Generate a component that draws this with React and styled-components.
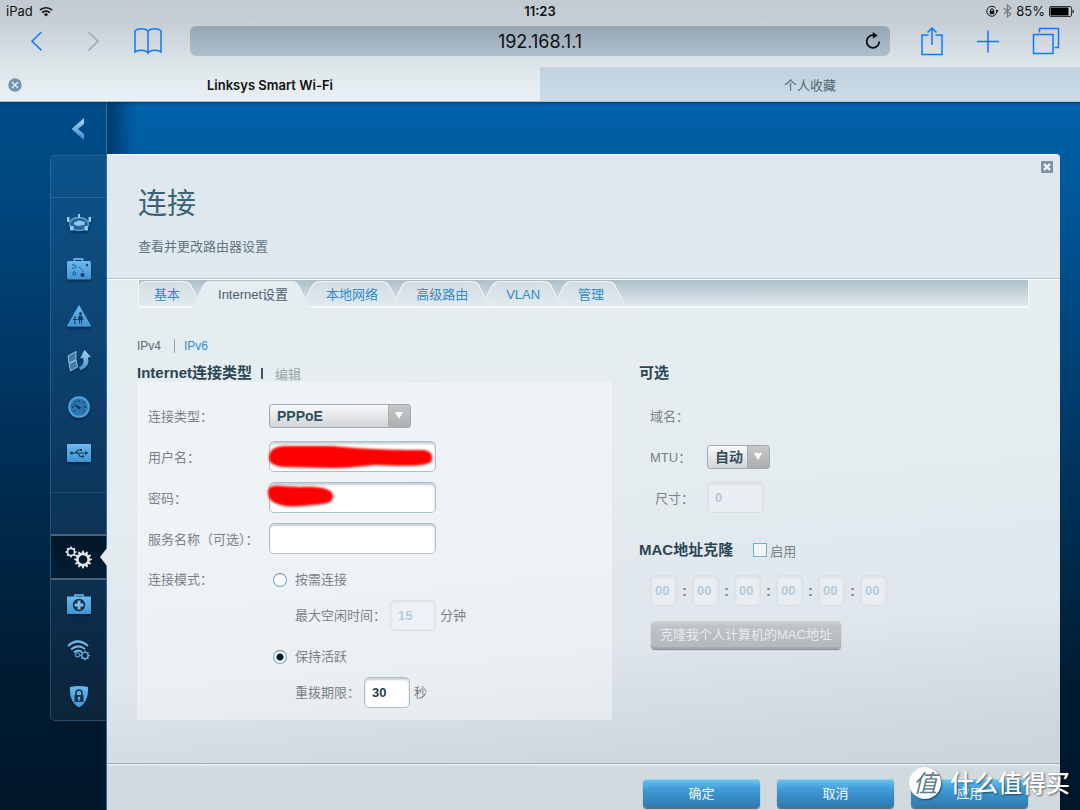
import styled, { createGlobalStyle, css } from "styled-components";
import { Fragment, useState } from "react";

const GlobalStyle = createGlobalStyle`
  * {
    box-sizing: border-box;
  }

  body {
    margin: 0;
    font-family: "Liberation Sans", "Noto Sans CJK SC", sans-serif;
    font-size: 13px;
    color: #7b8286;
  }

  button, input, select {
    font-family: inherit;
    margin: 0;
  }
`;

const tabs = ["基本", "Internet设置", "本地网络", "高级路由", "VLAN", "管理"];

const macParts = [0, 1, 2, 3, 4, 5];

const gearPath = (cx, cy, r, teeth) => {
  const points = [];
  for (let i = 0; i < teeth * 4; i++) {
    const radius = i % 4 < 2 ? r : r * 0.76;
    const angle = ((i - 0.5) / (teeth * 4)) * Math.PI * 2 - Math.PI / 2;
    points.push(
      `${(cx + radius * Math.cos(angle)).toFixed(2)} ${(cy + radius * Math.sin(angle)).toFixed(2)}`
    );
  }
  const hole = r * 0.48;
  return `M${points.join("L")}Z M${cx - hole} ${cy}a${hole} ${hole} 0 1 0 ${hole * 2} 0a${hole} ${hole} 0 1 0 ${-hole * 2} 0Z`;
};

export default function App() {
  const [active, setActive] = useState("Internet设置");
  const [mode, setMode] = useState("keep");

  return (
    <Page>
      <GlobalStyle />
      <BrowserHeader />
      <Workspace>
        <Sidebar />
        <Main>
          <Panel>
            <PanelHeader>
              <h1>连接</h1>
              <p>查看并更改路由器设置</p>
              <CloseButton type="button" aria-label="关闭">
                <svg width="14" height="14" viewBox="0 0 14 14">
                  <rect x="1" y="1" width="12" height="12" rx="1" fill="#7d939f" />
                  <path d="M4 4l6 6M10 4l-6 6" stroke="#f4f7f8" strokeWidth="2.4" />
                </svg>
              </CloseButton>
            </PanelHeader>
            <PanelBody>
              <TabBar>
                {tabs.map((tab, i) => (
                  <Tab
                    key={tab}
                    type="button"
                    $active={tab === active}
                    $first={i === 0}
                    $order={tabs.length - i}
                    onClick={() => setActive(tab)}
                  >
                    <span>{tab}</span>
                  </Tab>
                ))}
              </TabBar>
              <Versions>
                <span>IPv4</span>
                <a href="#ipv6">IPv6</a>
              </Versions>
              <Columns>
                <section>
                  <SectionTitle>
                    <h2>Internet连接类型</h2>
                    <i />
                    <a href="#edit">编辑</a>
                  </SectionTitle>
                  <Box>
                    <Row>
                      <label htmlFor="type">连接类型：</label>
                      <SelectWrap $width={142}>
                        <select id="type" defaultValue="PPPoE">
                          <option>PPPoE</option>
                        </select>
                      </SelectWrap>
                    </Row>
                    <Row>
                      <label htmlFor="user">用户名：</label>
                      <Field>
                        <TextInput id="user" type="text" $width={167} />
                        <Scribble width="172" height="32" viewBox="0 0 172 32" aria-hidden="true">
                          <path
                            d="M2 17C2 9 8 5 18 5L64 5C88 7 110 9 156 9C166 10 166 16 164 21C158 26 130 25 108 24C88 26 80 27 66 27L16 26C7 25 2 22 2 17Z"
                            fill="#ff0000"
                          />
                        </Scribble>
                      </Field>
                    </Row>
                    <Row>
                      <label htmlFor="pass">密码：</label>
                      <Field>
                        <TextInput id="pass" type="password" $width={167} />
                        <Scribble width="172" height="32" viewBox="0 0 172 32" aria-hidden="true">
                          <path
                            d="M1 12C0 4 6 3 14 4L34 5C46 4 66 5 66 14C66 22 56 22 46 23C36 24 26 25 18 24C9 22 2 20 1 12Z"
                            fill="#ff0000"
                          />
                        </Scribble>
                      </Field>
                    </Row>
                    <Row>
                      <label htmlFor="service">服务名称（可选）：</label>
                      <TextInput id="service" type="text" $width={167} />
                    </Row>
                    <ModeRow>
                      <span>连接模式：</span>
                      <ModeGroup>
                        <RadioLabel>
                          <Radio
                            type="radio"
                            name="mode"
                            checked={mode === "demand"}
                            onChange={() => setMode("demand")}
                          />
                          按需连接
                        </RadioLabel>
                        <SubRow>
                          <label htmlFor="idle">最大空闲时间：</label>
                          <TextInput
                            id="idle"
                            type="text"
                            defaultValue="15"
                            disabled={mode !== "demand"}
                            $width={46}
                          />
                          <span>分钟</span>
                        </SubRow>
                        <RadioLabel>
                          <Radio
                            type="radio"
                            name="mode"
                            checked={mode === "keep"}
                            onChange={() => setMode("keep")}
                          />
                          保持活跃
                        </RadioLabel>
                        <SubRow>
                          <label htmlFor="redial">重拨期限：</label>
                          <TextInput
                            id="redial"
                            type="text"
                            defaultValue="30"
                            disabled={mode !== "keep"}
                            $width={46}
                          />
                          <span>秒</span>
                        </SubRow>
                      </ModeGroup>
                    </ModeRow>
                  </Box>
                </section>
                <section>
                  <SectionTitle>
                    <h2>可选</h2>
                  </SectionTitle>
                  <Options>
                    <OptionRow>
                      <span>域名：</span>
                    </OptionRow>
                    <OptionRow>
                      <label htmlFor="mtu">MTU：</label>
                      <SelectWrap $width={63}>
                        <select id="mtu" defaultValue="自动">
                          <option>自动</option>
                        </select>
                      </SelectWrap>
                    </OptionRow>
                    <OptionRow $indent>
                      <label htmlFor="size">尺寸：</label>
                      <TextInput id="size" type="text" defaultValue="0" disabled $width={57} />
                    </OptionRow>
                  </Options>
                  <MacTitle>
                    <h2>MAC地址克隆</h2>
                    <label>
                      <CheckBox type="checkbox" />
                      启用
                    </label>
                  </MacTitle>
                  <MacRow>
                    {macParts.map((i) => (
                      <Fragment key={i}>
                        {i > 0 && <MacColon>:</MacColon>}
                        <MacInput
                          type="text"
                          aria-label={`MAC ${i + 1}`}
                          defaultValue="00"
                          disabled
                          $width={27}
                        />
                      </Fragment>
                    ))}
                  </MacRow>
                  <CloneButton type="button" disabled>
                    克隆我个人计算机的MAC地址
                  </CloneButton>
                </section>
              </Columns>
            </PanelBody>
            <PanelFooter>
              <BlueButton type="button">确定</BlueButton>
              <BlueButton type="button">取消</BlueButton>
              <BlueButton type="button">应用</BlueButton>
            </PanelFooter>
          </Panel>
        </Main>
      </Workspace>
      <Watermark>
        <b>值</b>
        <span>什么值得买</span>
      </Watermark>
    </Page>
  );
}

function BrowserHeader() {
  return (
    <Header>
      <StatusBar>
        <div>
          iPad
          <svg width="14" height="11" viewBox="0 0 14 11" fill="none" stroke="#111" strokeWidth="1.7">
            <path d="M1 4.2a8.6 8.6 0 0 1 12 0M3.2 6.6a5.4 5.4 0 0 1 7.6 0" />
            <path d="M7 10.6L4.9 8.4a3 3 0 0 1 4.2 0Z" fill="#111" stroke="none" />
          </svg>
        </div>
        <strong>11:23</strong>
        <div>
          <svg width="13" height="13" viewBox="0 0 13 13">
            <path d="M10.8 6.5A5 5 0 1 1 9.6 3M10.9 6.6V4.8" fill="none" stroke="#111" strokeWidth="1" />
            <path d="M9.4 5.3h3.2L11 7.4Z" fill="#111" />
            <rect x="3.7" y="5.8" width="4.6" height="3.4" fill="#111" />
            <path d="M4.7 6V5a1.3 1.3 0 0 1 2.6 0v1" fill="none" stroke="#111" />
          </svg>
          <svg width="9" height="14" viewBox="0 0 9 14" fill="none" stroke="#777d81" strokeWidth="1.2">
            <path d="M.8 4l7 6L4.4 13V1l3.4 3-7 6" />
          </svg>
          85%
          <svg width="25" height="11" viewBox="0 0 25 11">
            <rect x=".5" y=".5" width="22" height="10" rx="1.5" fill="none" stroke="#333" />
            <rect x="1.5" y="1.5" width="18" height="8" fill="#000" />
            <path d="M23.5 3.6q1.3.5 1.3 1.9t-1.3 1.9Z" fill="#111" />
          </svg>
        </div>
      </StatusBar>
      <Toolbar>
        <ToolGroup>
          <ToolButton type="button" aria-label="后退">
            <svg width="28" height="28" viewBox="0 0 28 28">
              <path d="M18.5 5L9 14.2l9.5 9.2" />
            </svg>
          </ToolButton>
          <ToolButton type="button" aria-label="前进" disabled>
            <svg width="28" height="28" viewBox="0 0 28 28">
              <path d="M9.5 5l9.5 9.2-9.5 9.2" />
            </svg>
          </ToolButton>
          <ToolButton type="button" aria-label="书签">
            <svg width="28" height="28" viewBox="0 0 28 28">
              <path d="M14 4.5C12 1 4 1 1 3.800V25C4 22.500 12 22.500 14 26.200C16 22.500 24 22.500 27 25V3.800C24 1 16 1 14 4.500ZM14 4.500V26" />
            </svg>
          </ToolButton>
        </ToolGroup>
        <AddressBar>
          <input type="text" aria-label="地址" defaultValue="192.168.1.1" />
          <button type="button" aria-label="重新载入">
            <svg width="18" height="18" viewBox="0 0 18 18">
              <path d="M10 3.300A6.300 6.300 0 1 0 15.300 9.600" fill="none" stroke="#111" strokeWidth="1.800" />
              <path d="M8.800 0l5 3.500-5 3.100Z" fill="#111" />
            </svg>
          </button>
        </AddressBar>
        <ToolGroup>
          <ToolButton type="button" aria-label="共享">
            <svg width="24" height="30" viewBox="0 0 24 30">
              <path d="M8.500 9H2v19.500h20V9h-6.500M12 19V2M7.500 6.500L12 2l4.500 4.500" />
            </svg>
          </ToolButton>
          <ToolButton type="button" aria-label="新标签页">
            <svg width="24" height="24" viewBox="0 0 24 24">
              <path d="M1 12.500h22M12 1.500v22" />
            </svg>
          </ToolButton>
          <ToolButton type="button" aria-label="标签页">
            <svg width="28" height="28" viewBox="0 0 28 28">
              <path d="M1.500 7.500h19.500v19h-19.500ZM7.500 5.500v-4h19v19h-4" />
            </svg>
          </ToolButton>
        </ToolGroup>
      </Toolbar>
      <PageTabs>
        <PageTab $active>
          <button type="button" aria-label="关闭标签页">
            <svg width="14" height="14" viewBox="0 0 14 14">
              <circle cx="7" cy="7" r="6.700" fill="#7095b0" />
              <path d="M4 4l6 6M10 4l-6 6" stroke="#eef4f8" strokeWidth="1.200" />
            </svg>
          </button>
          Linksys Smart Wi-Fi
        </PageTab>
        <PageTab>个人收藏</PageTab>
      </PageTabs>
    </Header>
  );
}

function Sidebar() {
  return (
    <Side>
      <BackButton type="button" aria-label="返回">
        <svg width="14" height="24" viewBox="0 0 14 24">
          <path d="M13 1v6L7 12l6 5v6L.500 12Z" fill="url(#ice)" />
        </svg>
      </BackButton>
      <Nav>
        <Spacer />
        <NavGroup>
          <NavItem href="#map" aria-label="设备">
            <svg width="26" height="20" viewBox="0 0 26 20">
              <ellipse cx="13" cy="11" rx="9.500" ry="6.500" fill="#2a659a" stroke="#5a9bcb" strokeWidth="1.500" />
              <path d="M8 9.500l5-2 6 1.500-1 3-6 1-4-1.500Z" fill="#8bc8f1" />
              <path d="M4 9q3-4 7-4.500M15 4.500q4 .500 7 4.500" fill="none" stroke="#5a9bcb" strokeWidth="1.200" />
              <path d="M1 4h2.500v5H1ZM22.500 4H25v5h-2.500ZM12 1h2v4h-2ZM4 13h3.500v4.500H4ZM18.500 13H22v4.500h-3.500Z" fill="#8fcdf6" />
            </svg>
          </NavItem>
          <NavItem href="#guest" aria-label="访客">
            <svg width="26" height="22" viewBox="0 0 26 22">
              <path d="M8.500 3.500v-2.500h8v2.500" fill="none" stroke="#5fa9df" strokeWidth="1.800" />
              <rect x="1" y="3" width="24" height="18.500" rx="1.500" fill="url(#sky)" />
              <path d="M6 7h3l1 1.500-1 1.500H6M7 14h2.500v3H7ZM13 9l2.500 2M15.500 12l2 2" fill="none" stroke="#1f5c8f" strokeWidth="1" />
              <circle cx="21" cy="7" r="1.200" fill="#103c62" />
              <circle cx="16.500" cy="17" r="2" fill="#103c62" />
            </svg>
          </NavItem>
          <NavItem href="#parental" aria-label="家长控制">
            <svg width="26" height="23" viewBox="0 0 26 23">
              <path d="M13 1.500L24.500 22H1.500Z" fill="url(#sky)" stroke="#55a8e3" strokeLinejoin="round" />
              <circle cx="14.500" cy="9.500" r="1.500" fill="#14395a" />
              <path d="M13 11.500h3l1.500 4.500h-1.500v3.500h-1v-3.500h-1v3.500h-1V16h-1.500Z" fill="#14395a" />
              <circle cx="9" cy="13.500" r="1.100" fill="#14395a" />
              <path d="M7 15h4v1H9.500v4h-1v-4H7Z" fill="#14395a" />
            </svg>
          </NavItem>
          <NavItem href="#priority" aria-label="媒体优先级">
            <svg width="26" height="24" viewBox="0 0 26 24">
              <path d="M2 7l8-4.500v8L3 14.500ZM3 15l7-4 1.500 7L4.500 22Z" fill="#3f7dab" stroke="#93c4e5" />
              <path d="M18.500 1l6.500 7-3 .500q2.500 9-7.500 13l-1.500-3q6-3 4-9.500L14 9.500Z" fill="url(#ice)" />
            </svg>
          </NavItem>
          <NavItem href="#speed" aria-label="速度测试">
            <svg width="22" height="22" viewBox="0 0 22 22">
              <circle cx="11" cy="11" r="9.800" fill="#2b76ae" stroke="#4aa3e0" strokeWidth="2" />
              <path d="M4 11h2M11 4v2M18 11h-2M7 5l1 1M16 6l-1 1M5.500 15.500l1-1M16.500 15.500l-1-1" stroke="#123c60" strokeWidth="1.300" />
              <path d="M4.500 7L13 11.500l-2 2Z" fill="#0f3355" />
            </svg>
          </NavItem>
          <NavItem href="#usb" aria-label="USB 存储">
            <svg width="24" height="18" viewBox="0 0 24 18">
              <path d="M0 0h24v18H0Z" fill="url(#sky)" />
              <path d="M4 9h15M8 9l3-3h3M11 9l2 3.500h3" fill="none" stroke="#14395a" strokeWidth="1.200" />
              <circle cx="4.500" cy="9" r="1.600" fill="#14395a" />
              <path d="M18 7l3.500 2-3.500 2ZM13 5h2v2h-2ZM15 11.500h2v2h-2Z" fill="#14395a" />
            </svg>
          </NavItem>
        </NavGroup>
        <Spacer />
        <NavItem href="#settings" aria-label="连接" $active>
          <svg width="28" height="24" viewBox="0 0 28 24" fill="#e2e5e7" fillRule="evenodd">
            <path d={gearPath(6, 7, 5.6, 8)} />
            <path d={gearPath(18, 14.5, 9, 12)} />
          </svg>
        </NavItem>
        <NavGroup $last>
          <NavItem href="#troubleshoot" aria-label="故障排除">
            <svg width="24" height="20" viewBox="0 0 24 20">
              <path d="M8 3V1h8v2" fill="none" stroke="#7cbde9" strokeWidth="1.500" />
              <path d="M0 2.500h24V20H0Z" fill="url(#sky)" />
              <circle cx="12" cy="11" r="6.200" fill="#12304a" />
              <path d="M10.500 6.500h3v3h3v3h-3v3h-3v-3h-3v-3h3Z" fill="#7fbde9" />
            </svg>
          </NavItem>
          <NavItem href="#wireless" aria-label="无线">
            <svg width="26" height="22" viewBox="0 0 26 22">
              <path d="M2 7q9.500-9 20 0M5 10.500q7-6 14-.500M8 13.500q4-3.500 8-.500" fill="none" stroke="#70b4e4" strokeWidth="2.200" />
              <g fill="#5ba5db" fillRule="evenodd">
                <path d={gearPath(11.5, 16, 3, 8)} />
                <path d={gearPath(19, 16.5, 5, 8)} />
              </g>
            </svg>
          </NavItem>
          <NavItem href="#security" aria-label="安全">
            <svg width="20" height="23" viewBox="0 0 20 23">
              <path d="M1 2q9-2 18 0q1 15-9 20.500Q0 17 1 2Z" fill="url(#sky)" />
              <path d="M5.500 10h9v7h-9Z" fill="#14344f" />
              <path d="M7 10V8a3 3 0 0 1 6 0v2" fill="none" stroke="#14344f" strokeWidth="1.600" />
              <circle cx="10" cy="13" r="1.300" fill="#6db1e2" />
              <path d="M9.500 13h1v3h-1Z" fill="#6db1e2" />
            </svg>
          </NavItem>
        </NavGroup>
      </Nav>
      <Defs width="0" height="0" aria-hidden="true">
        <linearGradient id="sky" x1="0" y1="0" x2="0" y2="1">
          <stop offset="0" stopColor="#6cb9ef" />
          <stop offset="1" stopColor="#3e94d4" />
        </linearGradient>
        <linearGradient id="ice" x1="0" y1="0" x2="0" y2="1">
          <stop offset="0" stopColor="#a5d4f4" />
          <stop offset="1" stopColor="#3d8ecb" />
        </linearGradient>
      </Defs>
    </Side>
  );
}

const Page = styled.div`
  min-height: 100vh;
  display: flex;
  flex-direction: column;
  position: relative;
`;

/* browser chrome */

const Header = styled.header`
  font-family: Inter, "Noto Sans CJK SC", sans-serif;
  color: #111;
  background: linear-gradient(#c2cbd1 0, #c6ced4 20px, #dfe6ea 67px, #e9f1f6 100%);
  border-bottom: 1px solid #aebfca;
  box-shadow: 0 1px 3px rgba(0, 20, 50, 0.5);
  position: relative;
`;

const StatusBar = styled.div`
  display: grid;
  grid-template-columns: 1fr auto 1fr;
  align-items: center;
  height: 22px;
  padding: 0 6px;
  font-size: 13px;

  div {
    display: flex;
    align-items: center;
    gap: 6px;
  }

  div:last-child {
    justify-content: flex-end;
    gap: 4px;
  }

  strong {
    font-weight: 600;
  }
`;

const Toolbar = styled.div`
  display: grid;
  grid-template-columns: 177px 1fr 177px;
  column-gap: 1px;
  align-items: center;
  height: 38px;
  padding: 0 12px;
`;

const ToolGroup = styled.div`
  display: flex;
  align-items: center;
  justify-content: space-between;
  padding: 0 27px 0 11px;

  &:last-child {
    padding: 0 8px 0 29px;
  }
`;

const ToolButton = styled.button`
  display: flex;
  padding: 0;
  border: 0;
  background: none;

  svg {
    fill: none;
    stroke: #0a7cff;
    stroke-width: 1.5;
  }

  &:disabled svg {
    stroke: #a2a9ae;
  }
`;

const AddressBar = styled.div`
  display: flex;
  align-items: center;
  height: 30px;
  padding: 0 6px 0 34px;
  border-radius: 6px;
  background: linear-gradient(#96a7b5, #b0bfcc);

  input {
    flex: 1;
    min-width: 0;
    border: 0;
    background: none;
    color: #111;
    font-size: 18px;
    text-align: center;
    outline: none;
  }

  button {
    display: flex;
    padding: 0;
    width: 20px;
    margin-left: 8px;
    border: 0;
    background: none;
  }
`;

const PageTabs = styled.div`
  display: grid;
  grid-template-columns: 1fr 1fr;
  height: 41px;
  padding-top: 7px;
`;

const PageTab = styled.div`
  display: flex;
  align-items: center;
  justify-content: center;
  position: relative;
  font-size: 13px;
  color: #526571;
  background: linear-gradient(#c0d1de, #cadde9);
  border-top: 1px solid #cbd8e1;

  ${({ $active }) =>
    $active &&
    css`
      font-weight: 600;
      color: #111;
      background: none;
      border-top-color: transparent;
    `}

  button {
    position: absolute;
    left: 8px;
    display: flex;
    padding: 0;
    border: 0;
    background: none;
  }
`;

/* router page */

const Workspace = styled.div`
  flex: 1;
  display: flex;
  background: linear-gradient(#0061a9 0, #005a9d 80px, #003c6c 300px, #001c31 580px, #00172a 100%);
`;

const Side = styled.aside`
  flex: none;
  width: 107px;
  padding-left: 50px;
  background: linear-gradient(rgba(0, 30, 60, 0.3), rgba(0, 20, 40, 0.2));
  border-right: 1px solid #2f6c9b;
`;

const BackButton = styled.button`
  display: flex;
  align-items: center;
  justify-content: center;
  width: 100%;
  height: 53px;
  padding: 0;
  border: 0;
  background: none;
`;

const Nav = styled.nav`
  border: 1px solid rgba(120, 170, 210, 0.25);
  border-right: 0;
  border-radius: 5px 0 0 5px;
  background: linear-gradient(rgba(50, 110, 160, 0.25), rgba(50, 80, 110, 0.22));
`;

const Spacer = styled.div`
  height: 41px;
`;

const NavGroup = styled.div`
  padding: 2px 0 16px;
  border-top: 1px solid rgba(120, 170, 210, 0.25);
  border-bottom: 1px solid rgba(120, 170, 210, 0.2);

  ${({ $last }) =>
    $last &&
    css`
      padding: 1px 0;
      border: 0;
    `}
`;

const NavItem = styled.a`
  display: flex;
  align-items: center;
  justify-content: center;
  height: 46px;
  position: relative;

  svg {
    filter: drop-shadow(0 2px 1px rgba(0, 15, 35, 0.5));
  }

  ${({ $active }) =>
    $active &&
    css`
      background: linear-gradient(#001628, #021f36);
      border-top: 2px solid #4c6375;
      border-bottom: 2px solid #4c6375;

      &::after {
        content: "";
        position: absolute;
        right: -1px;
        border: 9px solid transparent;
        border-right: 7px solid #e4ebee;
        border-left: 0;
      }
    `}
`;

const Defs = styled.svg`
  position: absolute;
`;

const Main = styled.main`
  flex: 1;
  min-width: 0;
  display: flex;
  padding: 52px 20px 0 0;
  background: linear-gradient(90deg, rgba(0, 25, 60, 0.55), transparent 28px);
`;

const Panel = styled.div`
  flex: 1;
  min-width: 0;
  display: flex;
  flex-direction: column;
  border-top: 1px solid #fff;
  border-radius: 0 4px 0 0;
  background: linear-gradient(
    175deg,
    #e1e9ef 0,
    #e5edf0 30%,
    #e5ecf0 50%,
    #dfe6ec 72%,
    #cdd7de 88%,
    #c6d4d9 100%
  );
`;

const PanelHeader = styled.div`
  position: relative;
  padding: 31px 31px 22px;
  background: linear-gradient(#dfe8ee, #dfe9f0);
  border-bottom: 1px solid #b3c1c9;
  border-radius: 0 4px 0 0;

  h1 {
    margin: 0 0 16px;
    font-size: 29px;
    line-height: 36px;
    font-weight: 400;
    color: #3c6378;
  }

  p {
    margin: 0;
    line-height: 18px;
    color: #64757f;
  }
`;

const CloseButton = styled.button`
  position: absolute;
  top: 5px;
  right: 6px;
  display: flex;
  padding: 0;
  border: 0;
  background: none;
`;

const PanelBody = styled.div`
  flex: 1;
  padding: 0 31px 42px 30px;
  border-top: 1px solid #fff;
`;

const TabBar = styled.div`
  display: flex;
  height: 28px;
  margin-left: 1px;
  border: solid #f4f8f9;
  border-width: 0 1px 2px;
  background: linear-gradient(#adbfc9, #dfe8ec);
`;

const tabShape = css`
  clip-path: polygon(
    0 100%,
    3px 94%,
    12px 22%,
    14px 10%,
    17px 2%,
    21px 0,
    calc(100% - 21px) 0,
    calc(100% - 17px) 2%,
    calc(100% - 14px) 10%,
    calc(100% - 12px) 22%,
    calc(100% - 3px) 94%,
    100% 100%
  );
`;

const Tab = styled.button`
  position: relative;
  z-index: ${({ $order }) => $order};
  padding: 4px 18px 0 20px;
  border: 0;
  background: none;
  font-size: 13px;
  line-height: 22px;
  white-space: nowrap;
  color: #2f8bca;

  span {
    position: relative;
    z-index: 1;
  }

  &::before,
  &::after {
    content: "";
    position: absolute;
    top: 1px;
    bottom: 0;
    left: -7px;
    right: -6px;
    background: #eef3f5;
    ${tabShape}
  }

  &::after {
    top: 2px;
    left: -6px;
    right: -5px;
    background: linear-gradient(#d3dde2, #e2eaee);
  }

  ${({ $first }) =>
    $first &&
    css`
      padding-left: 15px;

      &::before,
      &::after {
        left: 0;
        clip-path: polygon(
          0 100%,
          0 20%,
          2px 5%,
          6px 0,
          calc(100% - 21px) 0,
          calc(100% - 17px) 2%,
          calc(100% - 14px) 10%,
          calc(100% - 12px) 22%,
          calc(100% - 3px) 94%,
          100% 100%
        );
      }
    `}

  ${({ $active }) =>
    $active &&
    css`
      z-index: 10;
      color: #4d626e;

      &::before,
      &::after {
        top: 1px;
        bottom: -2px;
        left: -8px;
        background: #e6edf1;
      }
    `}
`;

const Versions = styled.div`
  display: flex;
  align-items: center;
  margin-top: 29px;
  line-height: 18px;
  font-size: 12px;
  color: #5a6b75;

  a {
    margin-left: 13px;
    padding-left: 9px;
    border-left: 1px solid #98a5ac;
    line-height: 14px;
    color: #2f8bca;
    text-decoration: none;
  }
`;

const Columns = styled.div`
  display: grid;
  grid-template-columns: 475fr 390fr;
  column-gap: 27px;
  margin-top: 9px;
`;

const SectionTitle = styled.div`
  display: flex;
  align-items: center;
  height: 18px;

  h2 {
    margin: 0;
    font-size: 15px;
    line-height: 18px;
    color: #2c4656;
  }

  i {
    width: 2px;
    height: 11px;
    margin: 0 12px 0 9px;
    background: #3a5566;
  }

  a {
    color: #9aa4aa;
    text-decoration: none;
  }
`;

const Box = styled.div`
  padding: 13px 11px 12px;
  background: rgba(255, 255, 255, 0.4);
`;

const Row = styled.div`
  display: grid;
  grid-template-columns: 121px 1fr;
  align-items: center;
  height: 41px;

  label {
    white-space: nowrap;
  }
`;

const Field = styled.div`
  position: relative;
`;

const Scribble = styled.svg`
  position: absolute;
  left: -2px;
  top: 0;
  pointer-events: none;
  filter: blur(1px);
`;

const TextInput = styled.input`
  display: block;
  width: ${({ $width }) => $width}px;
  height: 31px;
  padding: 0 7px;
  border: 1px solid #a9c1ca;
  border-radius: 5px;
  background: #fff;
  box-shadow: inset 0 2px 2px rgba(100, 115, 125, 0.35);
  font-size: 13px;
  font-weight: bold;
  color: #1f4053;
  outline: none;

  &:disabled {
    color: #b3cbdb;
    background: rgba(240, 244, 247, 0.5);
    border-color: #d8dfe3;
    box-shadow: inset 0 1px 3px rgba(100, 115, 125, 0.12);
  }
`;

const SelectWrap = styled.div`
  position: relative;
  width: ${({ $width }) => $width}px;

  select {
    display: block;
    width: 100%;
    height: 24px;
    padding: 0 7px;
    appearance: none;
    border: 1px solid #a5a9ab;
    border-radius: 3px;
    background: linear-gradient(#f8f9f9, #d3d4d5);
    font-size: 14px;
    font-weight: bold;
    color: #2f4f60;
    outline: none;
  }

  &::before {
    content: "";
    position: absolute;
    top: 1px;
    right: 1px;
    bottom: 1px;
    width: 21px;
    border-left: 1px solid #a8abad;
    background: linear-gradient(#c6c7c8, #acaeaf);
    pointer-events: none;
  }

  &::after {
    content: "";
    position: absolute;
    top: 8px;
    right: 8px;
    border: 4px solid transparent;
    border-top: 7px solid #fff;
    border-bottom: 0;
    pointer-events: none;
  }
`;

const ModeRow = styled.div`
  display: grid;
  grid-template-columns: 125px 1fr;
  padding-top: 11px;
  line-height: 20px;
`;

const ModeGroup = styled.div`
  display: flex;
  flex-direction: column;
  row-gap: 10px;
`;

const RadioLabel = styled.label`
  display: flex;
  align-items: center;
  gap: 8px;
  height: 20px;
`;

const Radio = styled.input`
  appearance: none;
  width: 14px;
  height: 14px;
  border: 1px solid #6fa9c4;
  border-radius: 50%;
  border-top-color: #71828c;
  background: #f8fafb;

  &:checked {
    background: radial-gradient(circle, #02192b 3px, #f8fafb 4px);
  }
`;

const SubRow = styled.div`
  display: flex;
  align-items: center;
  gap: 4px;
  height: 31px;
  padding-left: 22px;

  & + label {
    margin-top: 6px;
  }
`;

const Options = styled.div`
  padding: 13px 0 0 11px;
`;

const OptionRow = styled.div`
  display: grid;
  grid-template-columns: ${({ $indent }) => ($indent ? "52px" : "57px")} 1fr;
  align-items: center;
  height: 41px;
  padding-left: ${({ $indent }) => ($indent ? "5px" : "0")};
`;

const MacTitle = styled(SectionTitle)`
  margin-top: 23px;

  label {
    display: flex;
    align-items: center;
    gap: 3px;
    margin-left: 20px;
  }
`;

const CheckBox = styled.input`
  appearance: none;
  width: 14px;
  height: 14px;
  border: 1px solid #68b1d1;
  background: #f3f7f9;

  &:checked {
    background: #3a95c9;
  }
`;

const MacRow = styled.div`
  display: flex;
  align-items: center;
  margin: 16px 0 15px 11px;
`;

const MacInput = styled(TextInput)`
  padding: 0 4px;
`;

const MacColon = styled.span`
  width: 15px;
  font-size: 15px;
  font-weight: bold;
  text-align: center;
`;

const CloneButton = styled.button`
  display: block;
  height: 28px;
  margin-left: 12px;
  padding: 0 9px 3px;
  border: 0;
  border-radius: 4px;
  background: linear-gradient(#ced3d6, #bcc2c5 20%, #b2b8bb);
  box-shadow: inset 0 -2px 0 #a2a8ab, 0 1px 1px #80878b;
  font-size: 13px;
  color: #e7ebed;
`;

const PanelFooter = styled.div`
  display: flex;
  justify-content: flex-end;
  gap: 17px;
  padding: 15px 32px 2px;
  border-top: 1px solid #9fadb5;
  background: linear-gradient(#eaf0f2 1px, #d0dadf 2px, #d0d9de);
`;

const BlueButton = styled.button`
  width: 117px;
  height: 29px;
  padding: 0 0 2px;
  border: 0;
  border-radius: 4px;
  background: linear-gradient(#6cc5ef, #3f9cd8 35%, #2f77ad);
  box-shadow: inset 0 1px 0 #8fd5f4, 0 1px 1px #54687a;
  font-size: 13px;
  color: #f2f8fc;
`;

/* overlay mark in the bottom corner */

const Watermark = styled.div`
  position: absolute;
  right: 10px;
  bottom: 11px;
  z-index: 20;
  display: flex;
  align-items: center;
  gap: 9px;
  font-family: "Noto Sans CJK SC", sans-serif;
  pointer-events: none;

  b {
    width: 32px;
    height: 32px;
    border-radius: 50%;
    background: #fff;
    box-shadow: 1px 1px 2px rgba(0, 0, 0, 0.5);
    font-size: 24px;
    font-weight: 400;
    font-style: italic;
    line-height: 30px;
    text-align: center;
    color: #627f90;
  }

  span {
    font-size: 24px;
    font-weight: 500;
    line-height: 30px;
    padding-bottom: 2px;
    color: #fff;
    text-shadow: 1px 1px 2px rgba(0, 0, 0, 0.55);
  }
`;
